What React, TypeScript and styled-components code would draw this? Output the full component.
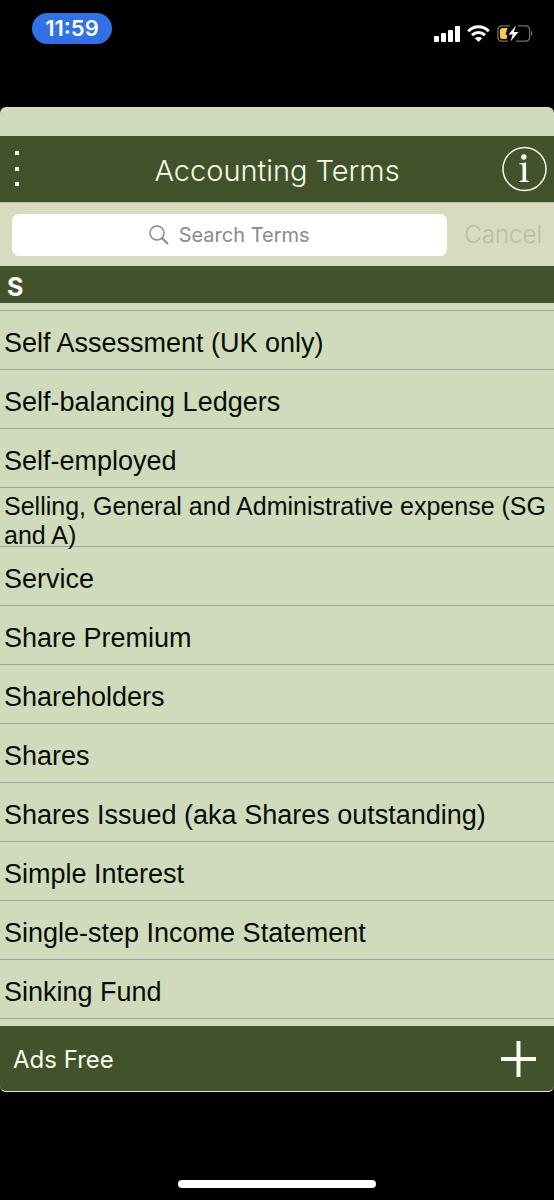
import React from "react";
import styled, { createGlobalStyle } from "styled-components";

const colors = {
  sage: "#d0dbbb",
  olive: "#42522a",
  sand: "#d8dcbf",
  divider: "#9ba39c",
  muted: "#b8bea4",
  hint: "#8a898f",
  blue: "#3071e7",
};

const GlobalStyle = createGlobalStyle`
  *, *::before, *::after { box-sizing: border-box; }
  body { margin: 0; background: #000; }
  button, input { font: inherit; color: inherit; }
`;

const Screen = styled.div`
  display: flex;
  flex-direction: column;
  min-height: 100vh;
  background: #000;
  font-family: "Liberation Sans", Arial, sans-serif;
`;

const StatusBar = styled.header`
  display: flex;
  justify-content: space-between;
  align-items: flex-start;
  height: 107px;
  padding: 13px 21px 0 32px;
`;

const Clock = styled.time`
  width: 80px;
  border-radius: 16px;
  background: ${colors.blue};
  color: #fff;
  font: 600 22px/31px Inter, sans-serif;
  text-align: center;
`;

const StatusIcons = styled.div`
  display: flex;
  align-items: center;
  gap: 7px;
  padding-top: 12px;
`;

const Card = styled.div`
  display: flex;
  flex-direction: column;
  flex: 1;
  border-bottom: 1px solid #e4e9da;
  border-radius: 6px;
  background: ${colors.sage};
  overflow: hidden;
`;

const TitleBar = styled.div`
  display: grid;
  grid-template-columns: 48px 1fr 48px;
  align-items: center;
  height: 66px;
  margin-top: 29px;
  padding: 0 6px;
  background: ${colors.olive};
`;

const Title = styled.h1`
  margin: 0;
  padding-top: 3px;
  color: #f5fae9;
  font: 300 29px/36px Inter, sans-serif;
  text-align: center;
`;

const IconButton = styled.button<{ $end?: boolean }>`
  display: flex;
  justify-self: ${(p) => (p.$end ? "end" : "start")};
  padding: 0;
  border: 0;
  background: none;
  color: #f8fcee;
  cursor: pointer;
`;

const SearchBar = styled.form`
  display: flex;
  align-items: center;
  gap: 17px;
  height: 64px;
  padding: 0 12px;
  border-top: 1px solid #bcc4a0;
  background: ${colors.sand};
`;

const SearchField = styled.label`
  display: flex;
  flex: 1;
  align-items: center;
  justify-content: center;
  gap: 10px;
  height: 42px;
  border-radius: 7px;
  background: #fff;
  color: ${colors.hint};
`;

const SearchInput = styled.input`
  width: 132px;
  padding: 0;
  border: 0;
  outline: 0;
  background: none;
  font: 400 20px/28px Inter, sans-serif;
  &::placeholder { color: ${colors.hint}; opacity: 1; }
`;

const CancelButton = styled.button`
  padding: 0;
  border: 0;
  background: none;
  color: ${colors.muted};
  font: 300 24px/28px Inter, sans-serif;
`;

const SectionHeader = styled.h2`
  margin: 0;
  padding: 6px 7px 0;
  background: ${colors.olive};
  color: #fff;
  font: 700 25px/31px Inter, sans-serif;
`;

const TermList = styled.ul`
  flex: 1;
  margin: 0;
  padding: 7px 0 6px;
  list-style: none;
`;

const TermRow = styled.li<{ $long: boolean }>`
  display: flex;
  align-items: center;
  height: 59px;
  padding: 7px 4px 0;
  border-top: 1px solid ${colors.divider};
  color: #080c06;
  font-size: ${(p) => (p.$long ? 25 : 27)}px;
  line-height: 29px;
  &:last-child { height: 60px; border-bottom: 1px solid ${colors.divider}; }
`;

const Footer = styled.footer`
  display: flex;
  align-items: center;
  justify-content: space-between;
  height: 65px;
  padding: 0 18px 0 13px;
  background: ${colors.olive};
`;

const AdsButton = styled.button`
  padding: 2px 0 0;
  border: 0;
  background: none;
  color: #f8fcee;
  font: 400 24px/32px Inter, sans-serif;
`;

const HomeArea = styled.div`
  display: flex;
  align-items: flex-end;
  justify-content: center;
  height: 108px;
  padding-bottom: 12px;
`;

const HomeIndicator = styled.div`
  width: 198px;
  height: 8px;
  border-radius: 4px;
  background: #fff;
`;

const terms = [
  "Self Assessment (UK only)",
  "Self-balancing Ledgers",
  "Self-employed",
  "Selling, General and Administrative expense (SG and A)",
  "Service",
  "Share Premium",
  "Shareholders",
  "Shares",
  "Shares Issued (aka Shares outstanding)",
  "Simple Interest",
  "Single-step Income Statement",
  "Sinking Fund",
];

// Terms longer than this wrap to two lines and take the smaller text size.
const LONG_TERM = 40;

const SignalIcon = () => (
  <svg width="26" height="17" viewBox="0 0 26 17" fill="#fff" aria-hidden="true">
    <rect x="0" y="11" width="5" height="6" rx="1" />
    <rect x="7" y="8" width="5" height="9" rx="1" />
    <rect x="14" y="5" width="5" height="12" rx="1" />
    <rect x="21" y="1" width="5" height="16" rx="1" />
  </svg>
);

const WifiIcon = () => (
  <svg width="23" height="17" viewBox="0 0 23 17" aria-hidden="true">
    <g fill="none" stroke="#fff" strokeWidth="3">
      <path d="M1.2 6.2C7 .4 16 .4 21.8 6.2" />
      <path d="M5 10.2c3.8-3.6 9.2-3.6 13 0" />
    </g>
    <path d="M11.5 17 7.8 13.3c2.2-1.8 5.2-1.8 7.4 0z" fill="#fff" />
  </svg>
);

const BatteryIcon = () => (
  <svg width="36" height="17" viewBox="0 0 36 17" aria-hidden="true">
    <path
      d="M13 .9H5C2.5.9.9 2.5.9 5v7c0 2.5 1.6 4.1 4.1 4.1h6M21 .9h7.5c2.5 0 4.1 1.6 4.1 4.1v7c0 2.5-1.6 4.1-4.1 4.1H19"
      fill="none"
      stroke="#6f6f70"
      strokeWidth="1.3"
    />
    <path d="M34 6v5c1.8-.8 1.8-4.2 0-5z" fill="#6f6f70" />
    <path d="M5.5 3H10.500L8.500 9.500l2 .8L9.500 14H5.500A2.500 2.500 0 0 1 3 11.500v-6A2.500 2.500 0 0 1 5.500 3z" fill="#f8ca45" />
    <path d="M19 .5 11.500 9.500h4.200L13.500 16.500 21.500 7h-4.700z" fill="#fff" />
  </svg>
);

const MenuIcon = () => (
  <svg width="22" height="38" viewBox="0 0 22 38" fill="currentColor" aria-hidden="true">
    <rect x="9" y="1" width="4" height="4" />
    <rect x="9" y="17" width="4" height="4" />
    <rect x="9" y="32" width="4" height="4" />
  </svg>
);

const InfoIcon = () => (
  <svg width="46" height="46" viewBox="0 0 46 46" aria-hidden="true">
    <circle cx="22.500" cy="23" r="21.500" fill="none" stroke="currentColor" strokeWidth="1.500" />
    <circle cx="21.800" cy="11" r="2.700" fill="currentColor" />
    <path d="M17.300 17.200c2.200 0 4-.3 6.800-1V33c0 1.500.7 1.900 3.200 1.900V36H17.100v-1.100c2.600 0 3.400-.4 3.400-1.900V20c0-1.300-.8-1.700-3.200-1.700z" fill="currentColor" />
  </svg>
);

const SearchIcon = () => (
  <svg width="20" height="20" viewBox="0 0 20 20" fill="none" stroke="currentColor" aria-hidden="true">
    <circle cx="8" cy="8" r="7" strokeWidth="1.500" />
    <path d="m13 13 6 6" strokeWidth="2.200" />
  </svg>
);

const PlusIcon = () => (
  <svg width="35" height="36" viewBox="0 0 35 36" fill="none" stroke="currentColor" strokeWidth="4" aria-hidden="true">
    <path d="M17.500 0v36M0 18h35" />
  </svg>
);

export default function App() {
  return (
    <Screen>
      <GlobalStyle />
      <StatusBar>
        <Clock>11:59</Clock>
        <StatusIcons>
          <SignalIcon />
          <WifiIcon />
          <BatteryIcon />
        </StatusIcons>
      </StatusBar>
      <Card>
        <TitleBar>
          <IconButton type="button" aria-label="Menu">
            <MenuIcon />
          </IconButton>
          <Title>Accounting Terms</Title>
          <IconButton type="button" aria-label="Information" $end>
            <InfoIcon />
          </IconButton>
        </TitleBar>
        <SearchBar role="search" onSubmit={(e) => e.preventDefault()}>
          <SearchField>
            <SearchIcon />
            <SearchInput type="text" aria-label="Search Terms" placeholder="Search Terms" />
          </SearchField>
          <CancelButton type="button">Cancel</CancelButton>
        </SearchBar>
        <SectionHeader>S</SectionHeader>
        <TermList>
          {terms.map((term) => (
            <TermRow key={term} $long={term.length > LONG_TERM}>
              {term}
            </TermRow>
          ))}
        </TermList>
        <Footer>
          <AdsButton type="button">Ads Free</AdsButton>
          <IconButton type="button" aria-label="Add">
            <PlusIcon />
          </IconButton>
        </Footer>
      </Card>
      <HomeArea>
        <HomeIndicator />
      </HomeArea>
    </Screen>
  );
}
